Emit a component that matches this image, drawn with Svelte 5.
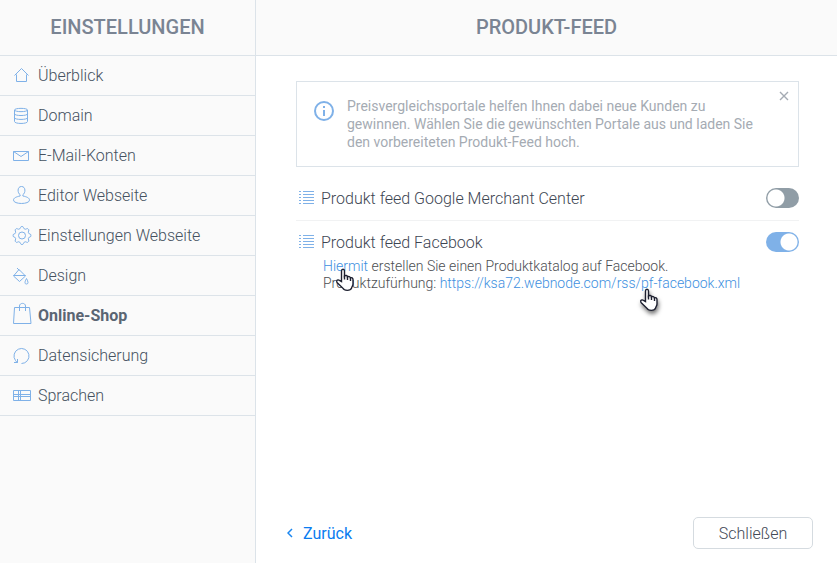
<script>
	const menu = [
		{ id: 'overview', label: 'Überblick' },
		{ id: 'domain', label: 'Domain' },
		{ id: 'mail', label: 'E-Mail-Konten' },
		{ id: 'editor', label: 'Editor Webseite' },
		{ id: 'settings', label: 'Einstellungen Webseite' },
		{ id: 'design', label: 'Design' },
		{ id: 'shop', label: 'Online-Shop' },
		{ id: 'backup', label: 'Datensicherung' },
		{ id: 'languages', label: 'Sprachen' }
	];
	const active = 'shop';

	// outline of the gear, eight soft teeth around the centre
	const gear = Array.from({ length: 64 }, (_, i) => {
		const a = (i / 64) * Math.PI * 2;
		const r = 8 + Math.max(-0.9, Math.min(0.9, 1.6 * Math.cos(8 * a)));
		return `${(11 + r * Math.sin(a)).toFixed(2)},${(10.5 - r * Math.cos(a)).toFixed(2)}`;
	}).join(' ');

	let google = $state(false);
	let facebook = $state(true);
	let showInfo = $state(true);
</script>

{#snippet icon(id)}
	<svg class="icon" viewBox="0 0 22 21" aria-hidden="true">
		{#if id === 'overview'}
			<path d="M3.5 10.500 10.500 3.500 17.500 10.500M5.500 9.500v7h10v-7" />
		{:else if id === 'domain'}
			<path d="M3.5 5v11.500c0 2.600 13 2.600 13 0V5c0-2.200-13-2.200-13 0c0 2.200 13 2.200 13 0M3.500 8.800c0 2.300 13 2.300 13 0M3.500 12.700c0 2.300 13 2.300 13 0" />
		{:else if id === 'mail'}
			<path d="M2.5 6.5h15v9h-15zM2.5 6.5l7.5 5 7.500-5" />
		{:else if id === 'editor'}
			<path d="M10.500 1.500c4.600 0 4 6.700 1.400 8.200v1.300c4 .8 6.600 2 6.600 4.100 0 4.500-16 4.500-16 0 0-2.100 2.600-3.300 6.600-4.100V9.700c-2.600-1.500-3.200-8.200 1.400-8.200z" />
		{:else if id === 'settings'}
			<polygon points={gear} />
			<circle cx="11" cy="10.5" r="3.5" />
		{:else if id === 'design'}
			<path d="M8 4.500 14.500 11 8.500 16.500 2.500 11zM6 3l2.500 2.500M2.500 10.500h12M15.500 13.500c2 3.500 2 5.500 0 5.500s-2-2 0-5.500z" />
		{:else if id === 'shop'}
			<path d="M3.500 2.500h15l1.500 16H2.500zM8.500 6V1c0-3.500 6-3.500 6 0v5" />
		{:else if id === 'backup'}
			<path d="M10.500 18.500a7.500 7.500 0 1 0-6-3l2 2.500M3 17.500h3.500V14" />
		{:else}
			<path d="M2.500 5.500h17v10h-17zM7.500 5.500v10M9.500 5.500v10M2.500 9.500h17M2.500 11.500h17" />
		{/if}
	</svg>
{/snippet}

{#snippet listIcon()}
	<svg class="list-icon" viewBox="0 0 15 14" aria-hidden="true">
		<path d="M0 .5h2M4 .5h11M0 3.500h2M4 3.500h11M0 6.500h2M4 6.500h11M0 9.500h2M4 9.500h11M0 12.500h2M4 12.500h11" />
	</svg>
{/snippet}

{#snippet pointer()}
	<svg class="pointer" viewBox="0 0 20 24" aria-hidden="true">
		<path d="M6.500 13.500V3c0-2.400 3-2.400 3 0v5c1-1 3-.5 3 .8 1-.8 2.700-.2 2.900 1 1.200-.6 2.600.2 2.600 1.700v4.500c0 2-1.500 3-1.500 4.300-1 2.700-7.500 2.700-8.500 0L2 14.500C.8 12.300 3 11.200 4.500 12.500z" />
		<path d="M9.500 7.500v4M12.500 8.500v3.500M15.500 9.800V13" />
	</svg>
{/snippet}

<div class="page">
	<aside>
		<h2>EINSTELLUNGEN</h2>
		<nav>
			{#each menu as item}
				<a href="#{item.id}" class:active={item.id === active}>
					{@render icon(item.id)}
					{item.label}
				</a>
			{/each}
		</nav>
	</aside>

	<main>
		<h2>PRODUKT-FEED</h2>
		<div class="content">
			{#if showInfo}
				<div class="info">
					<svg class="info-icon" viewBox="0 0 20 20" aria-hidden="true">
						<circle cx="10" cy="10" r="9" />
						<path d="M10 5v2M10 9v6" />
					</svg>
					<p>Preisvergleichsportale helfen Ihnen dabei neue Kunden zu gewinnen. Wählen Sie die gewünschten Portale aus und laden Sie den vorbereiteten Produkt-Feed hoch.</p>
					<button class="close" aria-label="Hinweis schließen" onclick={() => (showInfo = false)}>
						<svg viewBox="0 0 10 10"><path d="M1 1l8 8M9 1l-8 8" /></svg>
					</button>
				</div>
			{/if}

			<section class="feed">
				<div class="row">
					{@render listIcon()}
					<label for="google">Produkt feed Google Merchant Center</label>
					<input id="google" type="checkbox" bind:checked={google} />
				</div>
			</section>
			<section class="feed">
				<div class="row">
					{@render listIcon()}
					<label for="facebook">Produkt feed Facebook</label>
					<input id="facebook" type="checkbox" bind:checked={facebook} />
				</div>
				<p class="detail">
					<span class="target"><a href="#katalog">Hiermit</a>{@render pointer()}</span> erstellen Sie einen Produktkatalog auf Facebook.<br />
					Produktzufürhung: <span class="target feed-url"><a href="https://ksa72.webnode.com/rss/pf-facebook.xml">https://ksa72.webnode.com/rss/pf-facebook.xml</a>{@render pointer()}</span>
				</p>
			</section>
		</div>

		<footer>
			<a class="back" href="#back">
				<svg viewBox="0 0 6 10" aria-hidden="true"><path d="M5 1 1 5l4 4" /></svg>
				Zurück
			</a>
			<button class="done">Schließen</button>
		</footer>
	</main>
</div>

<style>
	:global(body) {
		margin: 0;
		background: #fff;
	}
	.page {
		display: grid;
		grid-template-columns: 256px 1fr;
		min-height: 100vh;
		font-family: Roboto, 'Liberation Sans', sans-serif;
		font-size: 16px;
		font-weight: 300;
		color: #3d4552;
	}
	svg {
		display: block;
		flex: none;
		fill: none;
		stroke: #7fb1e8;
	}
	h2 {
		box-sizing: border-box;
		height: 56px;
		margin: 0;
		border-bottom: 1px solid #dce3e9;
		background: #fafafa;
		color: #7a8493;
		font-size: 20px;
		font-weight: 500;
		line-height: 55px;
		text-align: center;
	}
	aside {
		border-right: 1px solid #dce3e9;
		background: #fafafa;
	}
	nav a {
		display: flex;
		align-items: center;
		gap: 5px;
		height: 39px;
		padding-left: 11px;
		border-bottom: 1px solid #dce3e9;
		color: #455160;
		text-decoration: none;
	}
	nav a.active {
		color: #5a6573;
		font-weight: 700;
	}
	.icon {
		width: 22px;
		height: 21px;
		overflow: visible;
	}

	main {
		display: flex;
		flex-direction: column;
		min-width: 0;
	}
	.content {
		flex: 1;
		padding: 25px 38px 0 40px;
	}
	.info {
		position: relative;
		display: flex;
		gap: 13px;
		padding: 15px 44px 15px 17px;
		border: 1px solid #dce3e9;
		color: #a5abb3;
		font-size: 14px;
		font-weight: 400;
		line-height: 18px;
	}
	.info p {
		margin: 0;
	}
	.info-icon {
		width: 20px;
		height: 20px;
		margin-top: 4px;
		stroke-width: 2;
	}
	.close {
		position: absolute;
		top: 8px;
		right: 8px;
		padding: 1px;
		border: 0;
		background: none;
	}
	.close svg {
		width: 10px;
		height: 10px;
		stroke: #a5abb3;
		stroke-width: 1.4;
	}
	.feed {
		padding-top: 11px;
	}
	.feed + .feed {
		border-top: 1px solid #f1f2f3;
	}
	.feed:not(:last-child) {
		padding: 21px 0 12px;
	}
	.row {
		display: flex;
		align-items: center;
		height: 20px;
		padding-left: 3px;
	}
	.list-icon {
		width: 15px;
		height: 14px;
		margin-right: 7px;
	}
	input {
		appearance: none;
		width: 33px;
		height: 20px;
		margin: 0 0 0 auto;
		border-radius: 10px;
		background: radial-gradient(circle at 10px 10px, #fff 8px, #909da6 9px);
	}
	input:checked {
		background: radial-gradient(circle at 23px 10px, #fff 8px, #7fb1e8 9px);
	}
	.detail {
		margin: 6px 0 0 27px;
		color: #4c4e52;
		font-size: 14px;
		line-height: 17px;
	}
	.detail a {
		color: #3d8fe0;
		text-decoration: none;
	}
	.target {
		position: relative;
	}
	.pointer {
		position: absolute;
		top: 10px;
		left: 12px;
		width: 20px;
		height: 24px;
		stroke: #1d2030;
		stroke-width: 1.4;
		fill: #fff;
	}
	.feed-url .pointer {
		top: 13px;
		left: 199px;
		filter: drop-shadow(1px 3px 2px #0008);
	}

	footer {
		display: flex;
		align-items: center;
		justify-content: space-between;
		padding: 0 24px 14px 31px;
	}
	.back {
		display: flex;
		align-items: center;
		gap: 10px;
		color: #0a7cf0;
		font-weight: 400;
		text-decoration: none;
	}
	.back svg {
		width: 6px;
		height: 10px;
		stroke: #1a86f0;
		stroke-width: 1.5;
	}
	.done {
		min-width: 120px;
		height: 32px;
		padding: 0 16px;
		border: 1px solid #d5dbe0;
		border-radius: 5px;
		background: #fff;
		color: #434956;
		font: inherit;
	}
</style>
